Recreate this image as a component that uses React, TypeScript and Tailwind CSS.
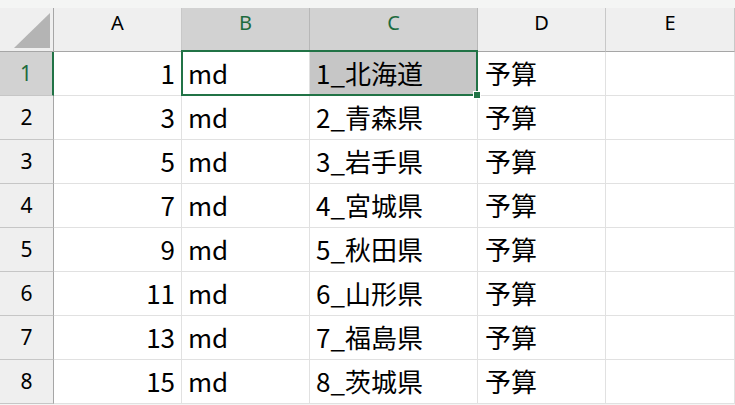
import React from "react";

const rows: [number, string][] = [
  [1, "1_北海道"],
  [3, "2_青森県"],
  [5, "3_岩手県"],
  [7, "4_宮城県"],
  [9, "5_秋田県"],
  [11, "6_山形県"],
  [13, "7_福島県"],
  [15, "8_茨城県"],
];

const cellBase =
  "h-[44px] border-r border-b border-[#e1e1e1] flex items-center pb-[2px] text-[26px] leading-none text-black whitespace-nowrap font-['Noto_Sans_CJK_JP','Noto_Sans',sans-serif]";
const colHdr =
  "h-[44px] border-r border-b flex items-center justify-center text-[20px] leading-none font-['Noto_Sans','Noto_Sans_CJK_JP',sans-serif]";
const rowHdr =
  "h-[44px] border-b border-b-[#c6c6c6] flex items-center justify-center text-[21px] leading-none font-['Noto_Sans','Noto_Sans_CJK_JP',sans-serif]";

export default function App() {
  return (
    <div className="relative w-[735px] h-[405px] overflow-hidden bg-[#f4f5f4]">
      <div className="h-[8px]" />
      <div className="grid grid-cols-[54px_128px_128px_168px_128px_129px]">
        <div className="h-[44px] bg-[#efefef] border-r border-b border-r-[#a6a6a6] border-b-[#a6a6a6] flex items-center justify-end">
          <svg width="40" height="40" viewBox="0 0 40 40">
            <polygon points="1,38 37,38 37,3" fill="#b4b4b4" />
          </svg>
        </div>
        <div className={`${colHdr} bg-[#efefef] border-r-[#c8c8c8] border-b-[#a6a6a6] pb-[13px] text-black`}>A</div>
        <div className={`${colHdr} bg-[#d2d2d2] border-b-2 border-r-[#b8b8b8] border-b-[#217346] pb-[12px] text-[#1d6b3e]`}>B</div>
        <div className={`${colHdr} bg-[#d2d2d2] border-b-2 border-r-[#b8b8b8] border-b-[#217346] pb-[12px] text-[#1d6b3e]`}>C</div>
        <div className={`${colHdr} bg-[#efefef] border-r-[#c8c8c8] border-b-[#a6a6a6] pb-[13px] text-black`}>D</div>
        <div className={`${colHdr} bg-[#efefef] border-r-[#c8c8c8] border-b-[#a6a6a6] pb-[13px] text-black`}>E</div>

        {rows.map(([n, pref], i) => (
          <React.Fragment key={i}>
            {i === 0 ? (
              <div className={`${rowHdr} bg-[#d2d2d2] border-r-2 border-r-[#217346] text-[#1d6b3e]`}>{i + 1}</div>
            ) : (
              <div className={`${rowHdr} bg-[#efefef] border-r border-r-[#a6a6a6] text-black`}>{i + 1}</div>
            )}
            <div className={`${cellBase} bg-white justify-end pr-[6px]`}>{n}</div>
            <div className={`${cellBase} bg-white pl-[6px]`}>md</div>
            <div className={`${cellBase} ${i === 0 ? "bg-[#c6c6c6]" : "bg-white"} pl-[6px]`}>{pref}</div>
            <div className={`${cellBase} bg-white pl-[7px]`}>予算</div>
            <div className="h-[44px] bg-white border-r border-b border-[#e1e1e1]" />
          </React.Fragment>
        ))}
      </div>
      <div className="absolute left-[181px] top-[50px] w-[297px] h-[46px] border-2 border-[#217346] pointer-events-none" />
      <div className="absolute left-[473px] top-[91px] w-[8px] h-[8px] bg-[#217346] border border-white" />
    </div>
  );
}
